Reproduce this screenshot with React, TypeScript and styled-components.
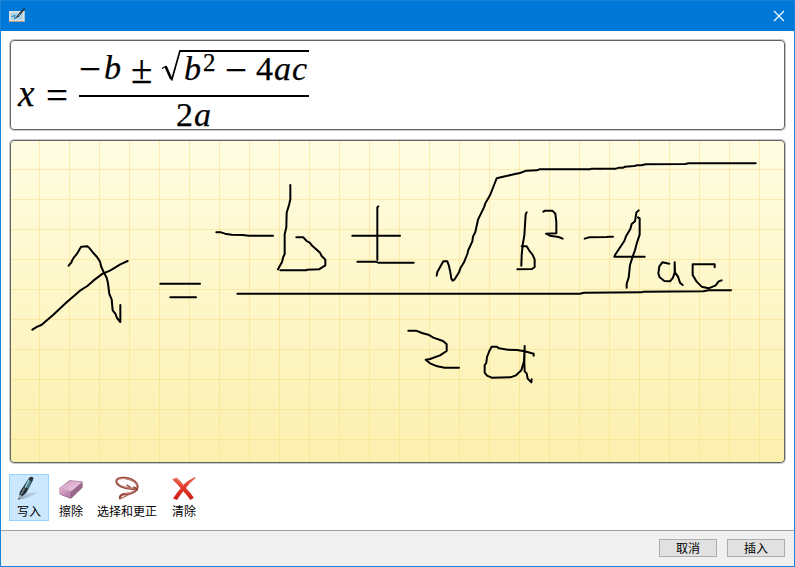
import React from "react";
import styled, { createGlobalStyle } from "styled-components";

const GlobalStyle = createGlobalStyle`
  * { box-sizing: border-box; }
  body { margin: 0; background: #fff; overflow: hidden; }
  svg { display: block; flex: none; }
`;

const Window = styled.div`
  width: 795px;
  height: 567px;
  display: flex;
  flex-direction: column;
  border: 1px solid #1883d7;
  border-top: 0;
  background: #fff;
  color: #000;
  font: 12px/16px "Noto Sans CJK SC", sans-serif;
`;

const TitleBar = styled.header`
  height: 31px;
  flex: none;
  display: flex;
  align-items: center;
  justify-content: space-between;
  padding: 0 9px 0 8px;
  margin: 0 -1px;
  background: #0078d7;
  border: 1px solid #1883d7;
  border-bottom: 0;
`;

const IconButton = styled.button`
  border: 0;
  padding: 0;
  margin-bottom: 1px;
  background: none;
`;

const Panels = styled.main`
  flex: none;
  display: flex;
  flex-direction: column;
  gap: 10px;
  padding: 9px 9px 0;
`;

const Panel = styled.section`
  border: 1px solid #646464;
  border-radius: 4px;
  box-shadow: 0 0 0 1px #c8c8c8;
`;

const Preview = styled(Panel)`
  height: 90px;
  display: flex;
  align-items: flex-start;
  padding: 9px 0 0 7px;
  font-family: "Liberation Serif", serif;
  -webkit-text-stroke: 0.25px #000;
`;

const Canvas = styled(Panel)`
  height: 323px;
  overflow: hidden;
  background:
    linear-gradient(90deg, rgba(247, 218, 130, 0.5) 1px, transparent 1px) 28px 0 / 30px 30px,
    linear-gradient(rgba(247, 218, 130, 0.5) 1px, transparent 1px) 0 28px / 30px 30px,
    linear-gradient(#fffde2, #fcf0ae);
`;

const Glyph = styled.span<{ $w: number; $size?: number; $drop?: number; $italic?: boolean }>`
  flex: none;
  width: ${(p) => p.$w}px;
  height: 34px;
  margin-top: ${(p) => p.$drop ?? 0}px;
  font-size: ${(p) => p.$size ?? 34}px;
  line-height: 34px;
  font-style: ${(p) => (p.$italic ? "italic" : "normal")};
  white-space: nowrap;
`;

const Lead = styled.div`
  display: flex;
  width: 61px;
  padding-top: 26px;
`;

const Fraction = styled.div`
  display: flex;
  flex-direction: column;
  width: 230px;
`;

const Numerator = styled.div`
  display: flex;
  height: 47px;
  border-bottom: 2px solid #000;
`;

const Radicand = styled.div`
  display: flex;
  flex: 1;
  height: 34px;
  padding-left: 2px;
  border-top: 2px solid #000;
`;

const Denominator = styled.div`
  display: flex;
  padding-left: 97px;
  height: 32px;
`;

const Toolbar = styled.nav`
  display: flex;
  flex: 1;
  align-items: flex-start;
  padding: 11px 8px 0;
`;

const Tool = styled.button<{ $w: number; $gap?: number; $active?: boolean }>`
  flex: none;
  display: flex;
  flex-direction: column;
  align-items: center;
  width: ${(p) => p.$w}px;
  height: 47px;
  margin-right: ${(p) => p.$gap ?? 0}px;
  padding: 1px 0 0;
  border: 1px solid ${(p) => (p.$active ? "#99d1ff" : "transparent")};
  background: ${(p) => (p.$active ? "#cce8ff" : "transparent")};
  color: #000;
  font: inherit;
  white-space: nowrap;
`;

const ToolLabel = styled.span`
  margin-top: 3px;
`;

const Footer = styled.footer`
  height: 36px;
  flex: none;
  display: flex;
  justify-content: flex-end;
  gap: 10px;
  padding: 8px 9px 0;
  border-top: 1px solid #a0a0a0;
  background: #f0f0f0;
`;

const Button = styled.button`
  width: 58px;
  height: 18px;
  padding: 0;
  border: 1px solid #adadad;
  background: #e1e1e1;
  color: #000;
  font: inherit;
  line-height: 16px;
`;

type StrokeGroup = { x: number; y: number; points: string[] };

/* Ink strokes are kept in thirds of a pixel, relative to each group's origin. */
const ink: StrokeGroup[] = [
  {
    x: 0, y: 170,
    points: [
      "206,287 210,282 214,278 216,272 222,262 229,254 236,243 239,237 244,230 262,229 269,235 280,249 291,261 300,275 304,291 311,306 320,323 324,340 328,372 335,388 338,421 346,431 351,444 361,456 361,405",
      "97,479 112,470 124,465 160,434 200,397 240,362 262,348 280,332 308,311 330,302 361,283 383,273",
      "481,341 600,341",
      "511,382 588,382",
    ],
  },
  {
    x: 205, y: 170,
    points: [
      "34,187 48,187 60,191 80,194 112,195 132,197 204,197",
      "256,45 256,88 252,105 245,128 244,172 239,193 239,252 234,263 231,276 219,298",
      "274,202 295,202 305,213 314,218 323,229 332,236 345,248 350,258 361,269 361,286 342,298 307,299 303,301 226,301",
      "442,197 585,197",
      "520,109 517,112 517,270",
      "457,275 510,275 520,278 626,278",
    ],
  },
  {
    x: 420, y: 145,
    points: [
      "50,392 52,381 60,367 70,349 82,349 87,363 91,382 94,401 98,407 103,404 117,382 121,370 132,352 142,327 145,315 157,289 159,275 166,261 174,224 192,187 196,175 210,151 221,123 230,100 249,95 282,88 300,84 319,77 350,76 358,73 510,73 515,71 540,71",
      "320,202 317,208 313,271 308,300 305,331 304,362",
      "305,304 320,304 330,320 337,328 344,343 344,366 336,372 292,373",
      "370,200 375,197 397,197 406,206 409,231 409,265 378,266 390,272 416,276 428,281",
      "494,281 507,277 560,276 568,275 579,275",
    ],
  },
  {
    x: 600, y: 130,
    points: [
      "0,116 48,116 57,113 70,113 75,110 102,108 112,106 125,106 137,103 255,102 267,100 467,100",
      "116,241 109,248 105,274 95,282 91,297 78,319 73,333 45,375 43,380 134,380",
      "114,262 119,265 119,314 110,341 105,361 99,377 90,405 86,443 80,461 80,473",
      "208,401 187,397 178,409 175,430 179,442 193,453 210,454 219,443 224,427 224,397 225,427 234,440 240,458 248,465",
      "344,412 344,403 278,403 278,435 290,455 305,470 326,475 347,466 356,454 365,451",
      "-1088,491 -60,491 -48,488 125,487 131,485 310,484 325,481 393,481",
    ],
  },
  {
    x: 380, y: 310,
    points: [
      "85,62 108,62 126,69 145,74 160,83 189,93 200,103 200,123 180,136 150,147 137,149 150,160 172,169 194,173 237,173",
      "461,137 461,131 434,124 411,120 383,119 357,115 350,110 335,110 328,123 321,141 319,158 314,166 314,188 321,197 335,203 391,202 408,196 424,181 432,154 434,108 433,160 434,184 440,190 443,206 454,217 455,208",
    ],
  },
];

const Handwriting = () => (
  <svg width="773" height="321" viewBox="11 141 773 321" fill="none" stroke="#000" strokeWidth="6" strokeLinecap="round" strokeLinejoin="round">
    {ink.map((group, i) => (
      <g key={i} transform={`translate(${group.x} ${group.y}) scale(0.33333)`}>
        {group.points.map((p) => <polyline key={p} points={p} />)}
      </g>
    ))}
  </svg>
);

const AppIcon = () => (
  <svg width="17" height="16" viewBox="0 0 17 16">
    <rect x="0" y="3" width="15.5" height="11" fill="#a9d3ea" />
    <path d="M0 3h15.5v10.5H0z M1.8 4.8h12v7H1.8z" fill="#e0dfd9" fillRule="evenodd" />
    <path d="M0 13.5h15.5" stroke="#a99f90" />
    <path d="M2.4 8.6l3.8-1.2-.8 3.8 3-3" fill="none" stroke="#2b7fb2" />
    <path d="M15 0 8.6 6.8 6.6 10.4l3.6-2.2L16.3.8z" fill="#26323c" />
    <path d="M9.4 7.6l1.4-1.6" stroke="#a9bdc7" />
  </svg>
);

const CloseIcon = () => (
  <svg width="12" height="12" viewBox="0 0 12 12" stroke="#fff" strokeWidth="1.15">
    <path d="M1 1l10 10M11 1 1 11" />
  </svg>
);

const PenIcon = () => (
  <svg width="24" height="24" viewBox="0 0 24 24">
    <defs>
      <linearGradient id="shade" x1="0" x2="1">
        <stop stopColor="#6f8292" /><stop offset="1" stopColor="#c3dcec" />
      </linearGradient>
    </defs>
    <path d="M1.8 23.8 9 18.5Q15 15.8 21.5 16.5 14 21.5 1.8 23.8z" fill="url(#shade)" opacity=".65" />
    <path d="M12.2 1.8Q14-.2 16.2 1.4 16.6 2.6 15.6 5L9.2 17 1.3 24 3 15.4z" fill="#27353c" />
    <path d="M11 4.2l3.7 1.5-3.4 6.8-3.6-1.8z" fill="#487e8c" />
    <path d="M12.2 3.8 8.2 11.6" stroke="#a5cfd8" strokeWidth="1.3" />
    <path d="M7.4 12.2 4.4 18" stroke="#8a979c" strokeWidth="1.1" />
    <path d="M2.6 18.4l2.6 1.6-3.7 3.6z" fill="#b3c1c7" />
    <path d="M2 21.7l.8.7-1.5 1.4z" fill="#111" />
  </svg>
);

const EraserIcon = () => (
  <svg width="24" height="24" viewBox="0 0 24 24">
    <defs>
      <linearGradient id="front" x1="0" y1="0" x2="1" y2="1">
        <stop stopColor="#e7afd6" /><stop offset="1" stopColor="#a9709b" />
      </linearGradient>
      <linearGradient id="top" x1="0" y1="0" x2="1" y2="1">
        <stop stopColor="#cf9ac0" /><stop offset="1" stopColor="#f0cde5" />
      </linearGradient>
    </defs>
    <path d="M.5 12 10.5 4.2 22.5 5.2Q24 5.4 23.6 7v4.5L12.8 21.9Q12 22.8 11 22.4L1.4 18.8Q.5 18.3 .5 17z" fill="#93607f" />
    <path d="M.8 12.5 11.7 15.5 11.8 22 2 18.5Q.8 18.1 .8 16.5z" fill="url(#front)" />
    <path d="M1 11.6 11 4.7 22.7 5.7 12.3 14.8z" fill="url(#top)" />
    <path d="M12.6 15.5 23 6.7v4.5L12.8 21.2z" fill="#99668c" />
    <path d="M1.2 12.2 12 15.2 22.7 6" fill="none" stroke="#f7dff0" strokeWidth=".7" />
  </svg>
);

const LassoIcon = () => (
  <svg width="24" height="24" viewBox="0 0 24 24" fill="none" strokeLinecap="round">
    <path d="M20.5 12.5C14.5 13.5 4 11.2 1.8 6.8 0 2.5 5.5 1.3 10.8 2 17.5 3 23.5 7 22.4 11.5 21.2 16 15.5 17.8 10.5 18 7 18.2 4.5 19.5 5 22.3" stroke="#95483f" strokeWidth="2.3" />
    <path d="M20 12.1C14.5 13 4.6 10.8 2.2 6.5.8 3.2 5.6 1.9 10.5 2.5 17 3.5 22.7 7.2 21.8 11 20.6 15.3 15.5 17.2 10.5 17.5" stroke="#db9a8d" strokeWidth=".85" />
    <path d="M5 22.4C10 22.2 11 18.7 15.6 17.8" stroke="#b36457" strokeWidth="1.2" />
    <path d="M12 9.2l3 1.8M19 11l3.5 2.8" stroke="#8b4137" strokeWidth="1.4" />
  </svg>
);

const ClearIcon = () => (
  <svg width="24" height="24" viewBox="0 0 24 24">
    <defs>
      <linearGradient id="cross" x1="0" y1="0" x2="0" y2="1">
        <stop stopColor="#e66350" /><stop offset=".5" stopColor="#e23727" /><stop offset="1" stopColor="#c91f18" />
      </linearGradient>
    </defs>
    <path d="M.3 3.4 4.4 1.6Q8 4.2 11.4 8.8 16 4.2 22.8 1L23.6 2Q17.6 6.5 13.9 12 18.3 16.6 21.8 21.7L18.4 24Q15.1 19 11.2 15.2 7.7 19.8 5 24L1 22.4Q4.2 17.2 8.7 12.2 5.2 7.7 .3 3.4z" fill="url(#cross)" />
    <path d="M2.3 3.3 4.3 2.6q4 3 7 7.2" fill="none" stroke="#f0907e" strokeWidth=".7" />
  </svg>
);

const RadicalSign = () => (
  <svg width="21" height="33" viewBox="0 0 21 33" fill="none" stroke="#000" strokeLinejoin="miter">
    <path d="M1 18.5 5 16.3" strokeWidth="1.3" />
    <path d="M4.6 16.2 10.2 29" strokeWidth="2.6" />
    <path d="M10.6 30.5 18.9 1H21" strokeWidth="1.7" />
    <path d="M18.5 1H21" strokeWidth="2" />
  </svg>
);

const Equation = () => (
  <>
    <Lead>
      <Glyph $w={28} $italic $size={37} $drop={1}>x</Glyph>
      <Glyph $w={30} $size={39} $drop={3}>=</Glyph>
    </Lead>
    <Fraction>
      <Numerator>
        <Glyph $w={25} $size={39} $drop={2}>−</Glyph>
        <Glyph $w={27} $italic $drop={1}>b</Glyph>
        <Glyph $w={30} $size={39} $drop={3}>±</Glyph>
        <RadicalSign />
        <Radicand>
          <Glyph $w={19} $italic>b</Glyph>
          <Glyph $w={22} $size={25} $drop={-6}>2</Glyph>
          <Glyph $w={31} $size={39} $drop={1}>−</Glyph>
          <Glyph $w={18}>4</Glyph>
          <Glyph $w={18} $italic>a</Glyph>
          <Glyph $w={15} $italic>c</Glyph>
        </Radicand>
      </Numerator>
      <Denominator>
        <Glyph $w={18} $drop={1}>2</Glyph>
        <Glyph $w={20} $italic $drop={1}>a</Glyph>
      </Denominator>
    </Fraction>
  </>
);

export default function App() {
  return (
    <Window>
      <GlobalStyle />
      <TitleBar>
        <AppIcon />
        <IconButton aria-label="关闭"><CloseIcon /></IconButton>
      </TitleBar>
      <Panels>
        <Preview><Equation /></Preview>
        <Canvas><Handwriting /></Canvas>
      </Panels>
      <Toolbar>
        <Tool $w={40} $gap={2} $active><PenIcon /><ToolLabel>写入</ToolLabel></Tool>
        <Tool $w={40}><EraserIcon /><ToolLabel>擦除</ToolLabel></Tool>
        <Tool $w={72} $gap={1}><LassoIcon /><ToolLabel>选择和更正</ToolLabel></Tool>
        <Tool $w={40}><ClearIcon /><ToolLabel>清除</ToolLabel></Tool>
      </Toolbar>
      <Footer>
        <Button>取消</Button>
        <Button>插入</Button>
      </Footer>
    </Window>
  );
}
